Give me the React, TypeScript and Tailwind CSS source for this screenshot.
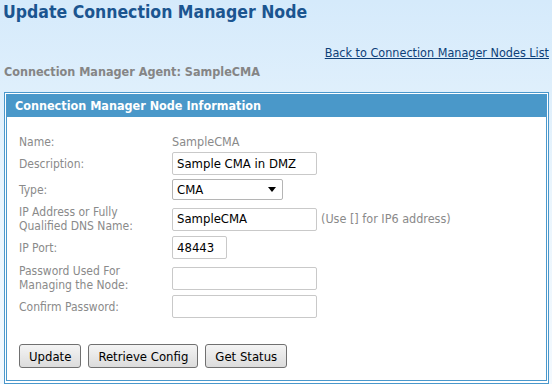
const font = "font-['DejaVu_Sans_Condensed','DejaVu_Sans',sans-serif] [font-stretch:condensed]";

const Field = ({ value, width = "w-[145px]" }: { value?: string; width?: string }) => (
  <div
    className={`${width} h-[23px] rounded-[2px] border border-[#c9c9c9] bg-white px-[4px] flex items-center text-[13px] text-black`}
  >
    {value}
  </div>
);

const Row = ({ label, mt, children }: { label: React.ReactNode; mt: string; children?: React.ReactNode }) => (
  <div className={`flex items-center ${mt}`}>
    <div className="w-[153px] text-[12px] leading-[14px] text-[#8a8a8a]">{label}</div>
    <div className="flex items-center">{children}</div>
  </div>
);

const Button = ({ children }: { children: React.ReactNode }) => (
  <button className="h-[24px] px-[9px] rounded-[3px] border border-[#707070] bg-gradient-to-b from-[#f4f4f4] to-[#dcdcdc] text-[13px] text-black leading-none">
    {children}
  </button>
);

export default function App() {
  return (
    <div className={`w-[552px] h-[384px] overflow-hidden bg-gradient-to-b from-[#d5eafb] via-[#eaf5fd] to-[#f3f9fe] ${font}`}>
      <h1 className="pl-[3px] pt-[1px] text-[17.5px] leading-[22px] font-bold text-[#1b5590]">
        Update Connection Manager Node
      </h1>
      <div className="flex justify-end pr-[3px] mt-[23px]">
        <a href="#" className="text-[12.5px] leading-[14px] text-[#0d3f78] underline">
          Back to Connection Manager Nodes List
        </a>
      </div>
      <div className="pl-[4px] mt-[5px] text-[12.5px] leading-[14px] font-bold text-[#858585]">
        Connection Manager Agent: SampleCMA
      </div>

      <div className="ml-[4px] mt-[13px] w-[545px] border border-[#4a98cc] bg-white p-[1px] pb-[2px]">
        <div className="border border-[#4a98cc] bg-white h-[287px]">
          <div className="h-[22px] bg-[#4a98c9] pl-[8px] flex items-center text-[12.5px] font-bold text-white">
            Connection Manager Node Information
          </div>

          <div className="pl-[12px]">
            <Row label="Name:" mt="mt-[18px]">
              <span className="text-[12.5px] text-[#8a8a8a] h-[14px] flex items-center">SampleCMA</span>
            </Row>
            <Row label="Description:" mt="mt-[3px]">
              <Field value="Sample CMA in DMZ" />
            </Row>
            <Row label="Type:" mt="mt-[4px]">
              <div className="w-[111px] h-[21px] rounded-[2px] border border-[#b5b5b5] bg-white pl-[4px] pr-[6px] flex items-center justify-between text-[13px] text-black">
                <span>CMA</span>
                <svg width="8" height="5" viewBox="0 0 8 5">
                  <path d="M0 0h8L4 5z" fill="#000" />
                </svg>
              </div>
            </Row>
            <Row
              label={
                <>
                  IP Address or Fully
                  <br />
                  Qualified DNS Name:
                </>
              }
              mt="mt-[5px]"
            >
              <Field value="SampleCMA" />
              <span className="ml-[4px] text-[12.5px] text-[#8a8a8a]">(Use [] for IP6 address)</span>
            </Row>
            <Row label="IP Port:" mt="mt-[3px]">
              <Field value="48443" width="w-[55px]" />
            </Row>
            <Row
              label={
                <>
                  Password Used For
                  <br />
                  Managing the Node:
                </>
              }
              mt="mt-[5px]"
            >
              <Field />
            </Row>
            <Row label="Confirm Password:" mt="mt-[3px]">
              <Field />
            </Row>

            <div className="flex gap-[7px] mt-[26px]">
              <Button>Update</Button>
              <Button>Retrieve Config</Button>
              <Button>Get Status</Button>
            </div>
          </div>
        </div>
      </div>
    </div>
  );
}
